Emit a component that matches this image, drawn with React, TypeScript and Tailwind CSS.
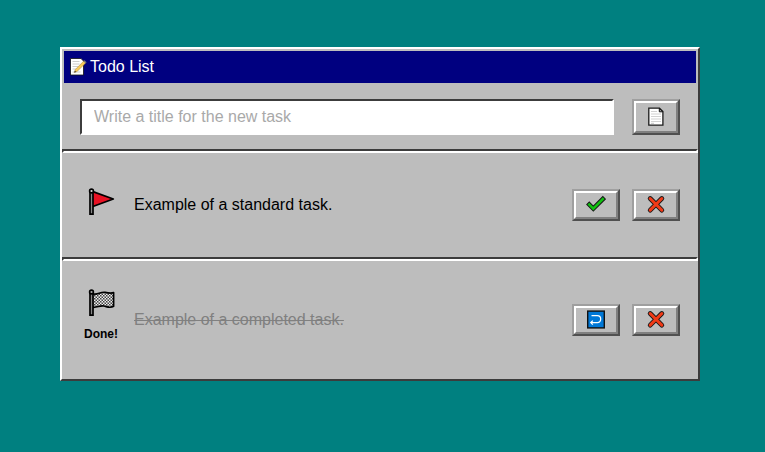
import type { ReactNode } from "react";

function Divider() {
  return <div className="h-1 border-2 border-t-[#3c3c3c] border-l-[#3c3c3c] border-r-white border-b-white" />;
}

function BevelButton({ label, tall = false, children }: { label: string; tall?: boolean; children: ReactNode }) {
  return (
    <button
      aria-label={label}
      className={`${tall ? "h-9" : "h-8"} w-12 shrink-0 border-2 border-t-[#9f9f9f] border-l-[#9f9f9f] border-r-[#505050] border-b-[#505050]`}
    >
      <span className="flex h-full w-full items-center justify-center border-2 border-t-white border-l-white border-r-[#808080] border-b-[#808080]">
        {children}
      </span>
    </button>
  );
}

function MemoIcon() {
  return (
    <svg width="18" height="18" viewBox="0 0.5 18 18">
      <path d="M1.5 1h10.5l2.5 2.5V17.5h-13z" fill="#fff" stroke="#111" strokeWidth=".8" />
      <path d="M3.5 4h7M3.5 6.5h7M3.5 9h6M3.5 11.5h4M3.5 14.5h8" stroke="#ccc" />
      <path d="M5.3 15l1-3 8.7-8.7 1.9 1.9-8.6 8.6z" fill="#f9cb5a" stroke="#a88238" strokeWidth=".5" />
      <path d="M14.4 3.8l1.1-1.1 2 2-1.1 1.1z" fill="#777" />
      <path d="M5.3 15l.6-1.8 1.3 1.2z" fill="#333" />
    </svg>
  );
}

function PageIcon() {
  return (
    <svg width="18" height="20" viewBox="0 0 18 20">
      <path d="M1.8 1.2h10.7l3.4 3.4v13.6H1.8z" fill="#fff" stroke="#1c1c1c" strokeWidth="1.3" />
      <path d="M12.3 1.4v3.4h3.4z" fill="#aaa" stroke="#111" />
      <path d="M4 4.5h6M4 7h10M4 9.5h10M4 12h10M4 14.5h10M4 16.3h3" stroke="#d2d2d2" strokeWidth="1.2" />
    </svg>
  );
}

function RedFlag() {
  return (
    <svg width="28" height="28" viewBox="0 0 28 28">
      <path d="M3.5 3.2L25.3 11L3.5 19z" fill="#e81224" stroke="#000" strokeWidth="1.8" strokeLinejoin="round" />
      <path d="M2 4h3v22.2H2z" fill="#8a8a8a" stroke="#000" strokeWidth="1.7" />
      <circle cx="3.5" cy="3" r="1.9" fill="#ddd" stroke="#000" strokeWidth="1.6" />
    </svg>
  );
}

function CheckeredFlag() {
  return (
    <svg width="28" height="28" viewBox="0 0 28 28">
      <defs>
        <pattern id="checks" width="3" height="3" patternUnits="userSpaceOnUse">
          <rect width="3" height="3" fill="#f0f0f0" />
          <path d="M0 0h1.5v1.5H0zM1.5 1.5H3V3H1.5z" fill="#444" />
        </pattern>
      </defs>
      <path
        d="M4 4.5C9 7 12 2.5 17 3.3C20 4 23 4.5 25.6 3.6V17.3C22 19.6 19 17.6 16 17C12 16 9 19 4 18.2z"
        fill="url(#checks)"
        stroke="#000"
        strokeWidth="1.7"
        strokeLinejoin="round"
      />
      <path d="M2 4h3v22.2H2z" fill="#8a8a8a" stroke="#000" strokeWidth="1.7" />
      <circle cx="3.5" cy="3" r="1.9" fill="#aaa" stroke="#000" strokeWidth="1.6" />
    </svg>
  );
}

function CheckIcon() {
  return (
    <svg width="20" height="20" viewBox="0 0.7 20 20" fill="none" strokeLinecap="square">
      <path d="M3.3 10.3L7.3 14.3L16.8 4.8" stroke="#181818" strokeWidth="4.6" />
      <path d="M3.3 10.3L7.3 14.3L16.8 4.8" stroke="#10c010" strokeWidth="2.6" />
    </svg>
  );
}

function CrossIcon() {
  return (
    <svg width="20" height="20" viewBox="0 0.7 20 20" fill="none" strokeLinecap="round">
      <path d="M4.2 4.2L15.8 15.8M15.8 4.2L4.2 15.8" stroke="#181818" strokeWidth="4.8" />
      <path d="M4.2 4.2L15.8 15.8M15.8 4.2L4.2 15.8" stroke="#f03a17" strokeWidth="3" />
    </svg>
  );
}

function ReturnIcon() {
  return (
    <svg width="20" height="20" viewBox="0 0.6 20 20" fill="none">
      <rect x="1.7" y="1.7" width="16.6" height="16.8" fill="#0078d7" stroke="#111" strokeWidth="1.4" />
      <path d="M5.5 6.2H11.3C15.8 6.2 15.8 13.2 11.3 13.2H5" stroke="#fff" strokeWidth="1.3" />
      <path d="M6.8 11.2L4.8 13.2L6.8 15.2" stroke="#fff" strokeWidth="1.3" />
    </svg>
  );
}

export default function App() {
  return (
    <div className="h-[452px] w-[765px] bg-[#008080] pt-[47px] pl-[60px] font-['Liberation_Sans',Arial,sans-serif] text-base text-black">
      <main className="h-[334px] w-[640px] border-2 border-t-white border-l-white border-r-[#3c3c3c] border-b-[#3c3c3c] bg-[#bdbdbd]">
        <header className="mx-0.5 mt-0.5 flex h-8 items-center bg-[#000080] pl-[5px] text-white">
          <MemoIcon />
          <h1 className="ml-[3px]">Todo List</h1>
        </header>
        <form className="flex h-[66px] items-start gap-[18px] px-[18px] pt-4">
          <input
            placeholder="Write a title for the new task"
            className="h-9 w-[534px] border-2 border-t-[#3c3c3c] border-l-[#3c3c3c] border-r-white border-b-white bg-white px-3 outline-none placeholder:text-[#a9a9a9]"
          />
          <BevelButton label="Add task" tall><PageIcon /></BevelButton>
        </form>
        <Divider />
        <section className="flex h-[104px] items-center px-[18px]">
          <div className="flex w-[42px] justify-center pb-1.5 pl-0.5"><RedFlag /></div>
          <p className="ml-3 flex-1">Example of a standard task.</p>
          <div className="flex gap-3">
            <BevelButton label="Complete"><CheckIcon /></BevelButton>
            <BevelButton label="Delete"><CrossIcon /></BevelButton>
          </div>
        </section>
        <Divider />
        <section className="flex h-[118px] items-center px-[18px]">
          <div className="flex w-[42px] flex-col items-center pb-[9px]">
            <div className="pl-0.5"><CheckeredFlag /></div>
            <span className="mt-[9px] text-xs leading-4 font-bold">Done!</span>
          </div>
          <p className="ml-3 flex-1 text-[#808080] line-through">Example of a completed task.</p>
          <div className="flex gap-3">
            <BevelButton label="Restore"><ReturnIcon /></BevelButton>
            <BevelButton label="Delete"><CrossIcon /></BevelButton>
          </div>
        </section>
      </main>
    </div>
  );
}
